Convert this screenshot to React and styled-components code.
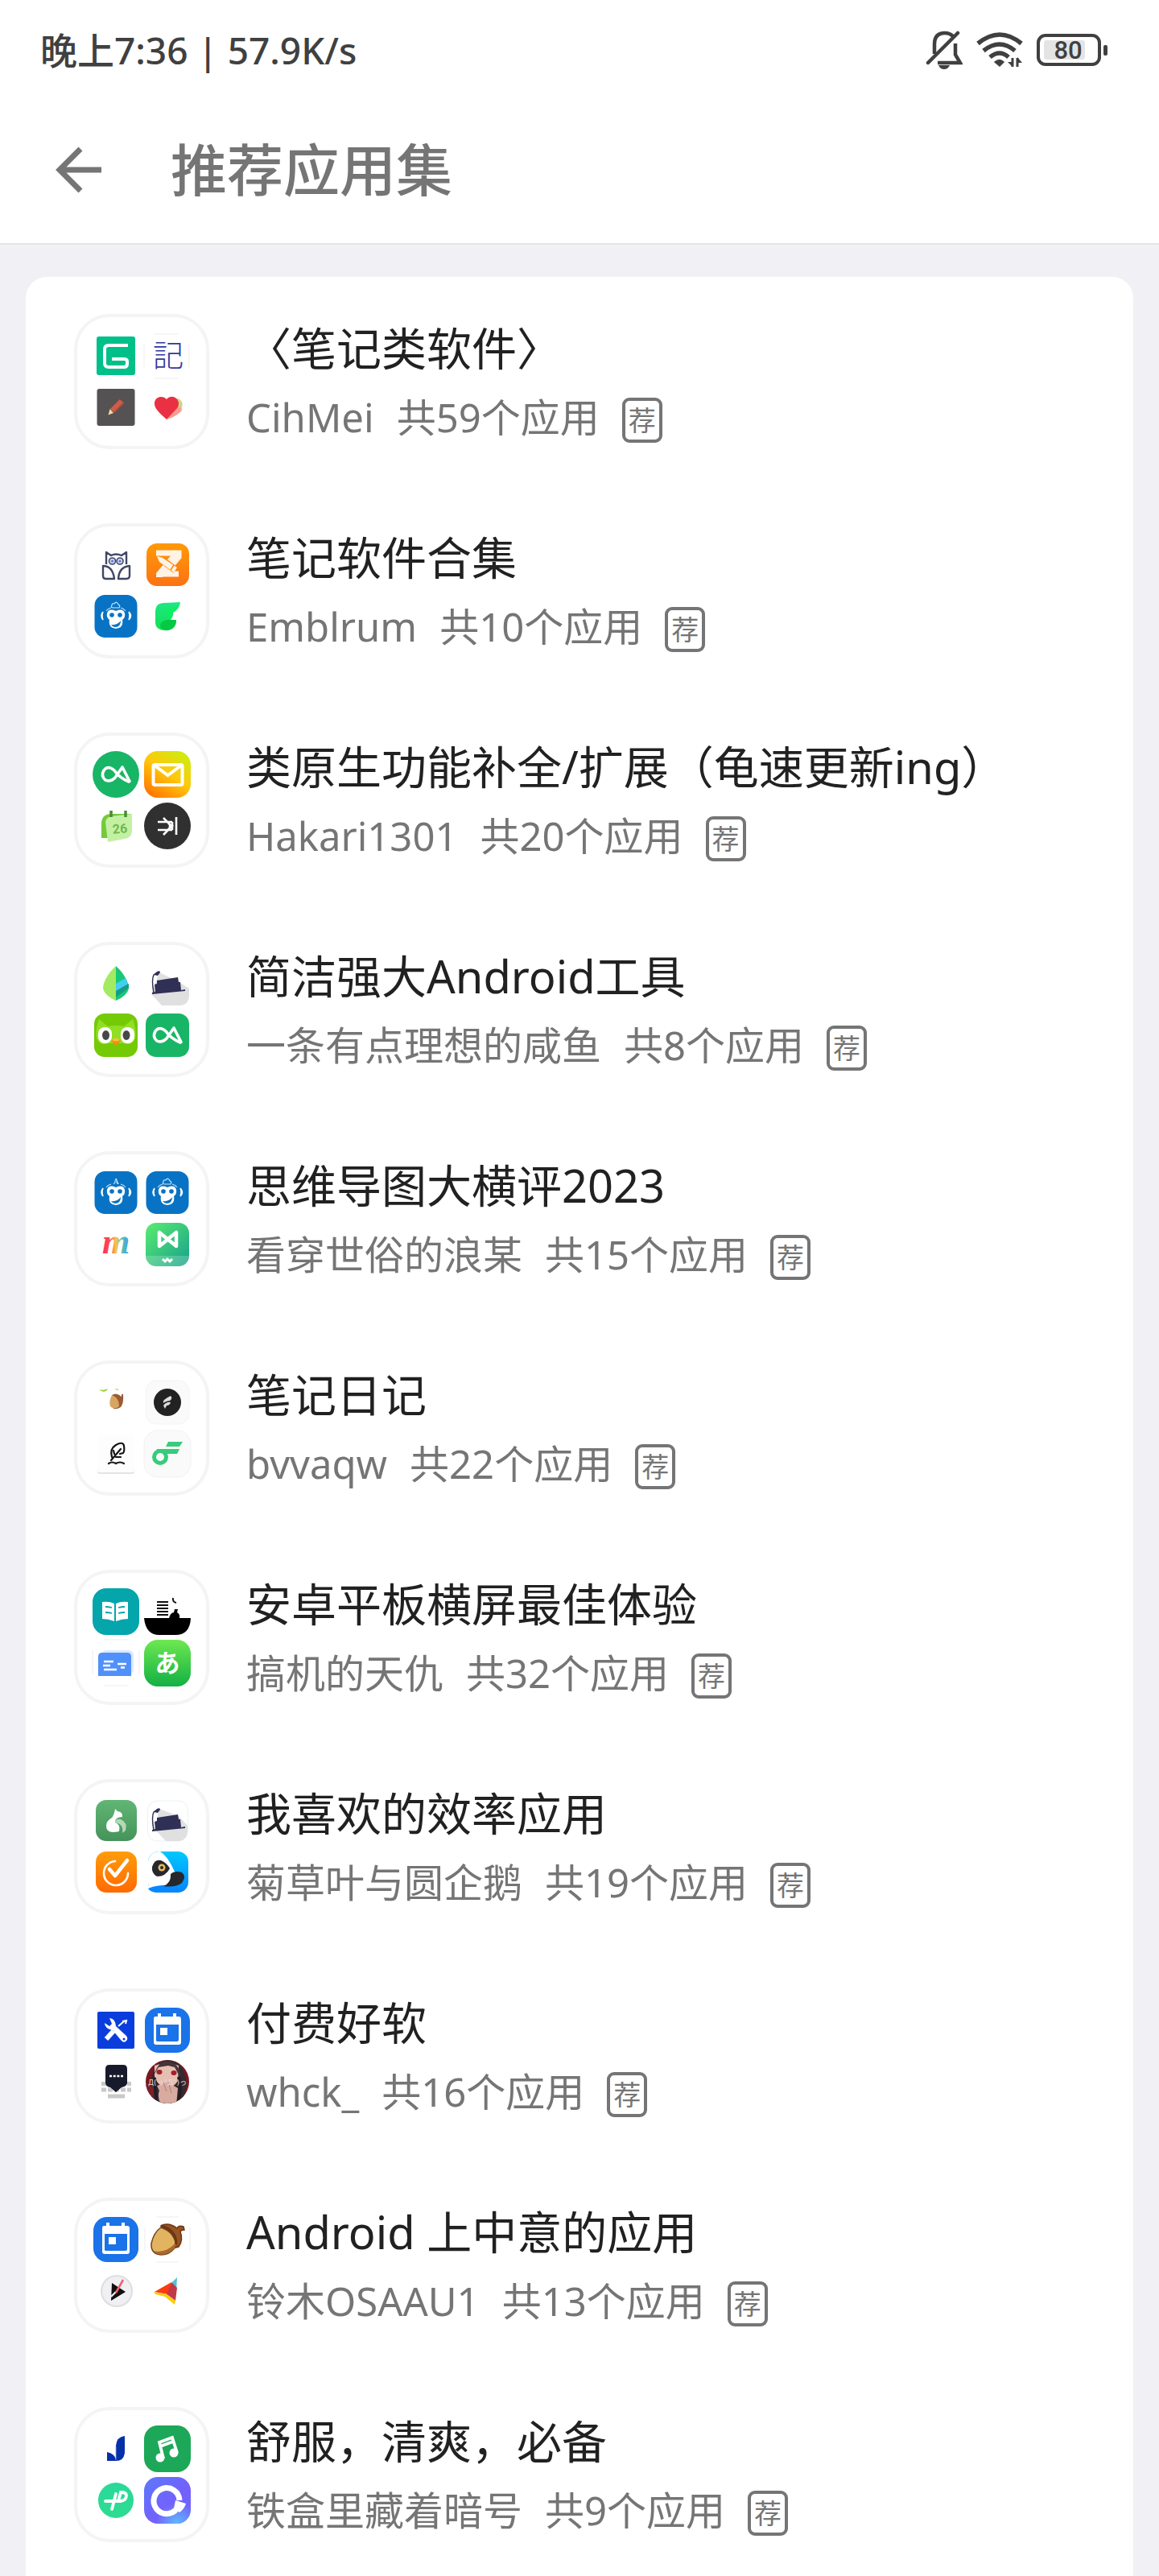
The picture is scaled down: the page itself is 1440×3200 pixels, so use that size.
import React from "react";
import styled, { createGlobalStyle } from "styled-components";

const GlobalStyle = createGlobalStyle`
  * { box-sizing: border-box; }
  body {
    margin: 0;
    background: #f0f0f5;
    font-family: "Noto Sans", "Noto Sans CJK SC", sans-serif;
  }
`;

const Page = styled.div`
  display: flex;
  flex-direction: column;
  min-height: 100vh;
`;

const Header = styled.header`
  background: #fff;
  border-bottom: 2px solid #e4e4e9;
`;

const StatusBar = styled.div`
  display: flex;
  align-items: center;
  justify-content: space-between;
  height: 124px;
  padding: 0 64px 0 50px;
  color: #404040;
  font-size: 46px;
  font-weight: 500;
  line-height: 60px;
`;

const StatusIcons = styled.div`
  display: flex;
  align-items: center;
  gap: 16px;
`;

const Toolbar = styled.div`
  display: flex;
  align-items: center;
  gap: 80px;
  height: 178px;
  padding: 0 64px 4px;
`;

const BackButton = styled.button`
  display: flex;
  padding: 0;
  border: 0;
  background: none;
  color: #757575;
  cursor: pointer;
`;

const Heading = styled.h1`
  margin: 0;
  color: #757575;
  font-size: 70px;
  font-weight: 500;
  line-height: 96px;
`;

const List = styled.ul`
  display: flex;
  flex: 1;
  flex-direction: column;
  gap: 92px;
  margin: 40px 32px 0;
  padding: 46px 60px 0;
  border-radius: 26px 26px 0 0;
  background: #fff;
  list-style: none;
`;

const Row = styled.a`
  display: flex;
  align-items: center;
  gap: 46px;
  color: inherit;
  text-decoration: none;
`;

const Folder = styled.div`
  display: grid;
  flex: none;
  grid-template-columns: 60px 60px;
  gap: 4px;
  padding: 18px;
  border: 4px solid #f4f4f4;
  border-radius: 44px;
`;

const Glyph = styled.svg`
  display: block;
  width: 60px;
  height: 60px;
  overflow: visible;
`;

const Info = styled.div`
  display: flex;
  flex: 1;
  flex-direction: column;
  min-width: 0;
  gap: 6px;
  padding-top: 2px;
`;

const Title = styled.h2`
  margin: 0;
  color: #212121;
  font-size: 56px;
  font-weight: 400;
  line-height: 80px;
  white-space: nowrap;
`;

const Meta = styled.p`
  display: flex;
  align-items: center;
  gap: 28px;
  margin: 0;
  color: #757575;
  font-size: 49px;
  line-height: 80px;
  white-space: nowrap;
`;

const Badge = styled.span`
  display: flex;
  align-items: center;
  justify-content: center;
  width: 50px;
  height: 56px;
  margin-top: 8px;
  border: 4px solid #757575;
  border-radius: 9px;
  font-size: 34px;
  line-height: 44px;
`;

const Icon = ({ children }) => (
  <Glyph viewBox="0 0 60 60" fill="none" aria-hidden="true">{children}</Glyph>
);

const Gradient = ({ id, from, to, diagonal }) => (
  <defs>
    <linearGradient id={id} x1="0" y1="0" x2={diagonal ? 1 : 0} y2="1">
      <stop stopColor={from} />
      <stop offset="1" stopColor={to} />
    </linearGradient>
  </defs>
);

const GNote = () => (
  <Icon>
    <rect x="6" y="6" width="48" height="48" rx="3" fill="#00c08a" />
    <path d="M45 17H21Q16 17 16 22V39Q16 44 21 44H40Q44 44 44 40V37Q44 34 40 34H25" stroke="#fff" strokeWidth="4" />
  </Icon>
);

const JiNote = () => (
  <Icon>
    <path d="M14 3H43M14 58H43M1 16V44M57 16V44" stroke="#f6f6f6" strokeWidth="2" />
    <text x="31" y="43" textAnchor="middle" fontSize="38" fontFamily="Noto Sans CJK JP, sans-serif" fontWeight="300" fill="#33389c">記</text>
  </Icon>
);

const PencilNote = () => (
  <Icon>
    <rect x="6.500" y="7" width="47" height="46" rx="3" fill="#555253" />
    <path d="M25 34L37 22" stroke="#cf5c47" strokeWidth="6" />
    <path d="M27.500 36.500L40 24" stroke="#b34d3c" strokeWidth="1.500" />
    <path d="M22.500 32L27 37L20.500 39.500Z" fill="#f0d9a8" />
  </Icon>
);

const Heart = () => (
  <Icon>
    <path d="M30 45C46 38 53 27 46 21C42 17 38 20 36 24Z" fill="#d3d184" />
    <path d="M29 45C20 37 13 31 14 24C15 16 25 15 29 20C34 14 43 17 44 25C44 33 36 39 29 45Z" fill="#ea3043" />
    <path d="M29 45L43 30Q50 30 47 35Q40 42 29 45Z" fill="#fa9c90" />
  </Icon>
);

const Owl = () => (
  <Icon>
    <g stroke="#414765" strokeWidth="2.400" strokeLinejoin="round">
      <path d="M18 29V14L24 18Q30 15 37 18L43 14V29" />
      <path d="M14 31Q26 31 28 47H17Q14 47 14 43ZM47 31Q34 32 33 47H43Q47 47 47 43Z" />
      <circle cx="25.500" cy="25" r="4" strokeWidth="1.600" fill="#c8d2f8" />
      <circle cx="35" cy="25" r="4" strokeWidth="1.600" fill="#c8d2f8" />
    </g>
    <circle cx="25.500" cy="25" r="1.500" fill="#6278c8" />
    <circle cx="35" cy="25" r="1.500" fill="#6278c8" />
  </Icon>
);

const ZNote = () => (
  <Icon>
    <Gradient id="znote" from="#ff9a05" to="#fc7215" />
    <rect x="4" y="3" width="53" height="53" rx="13" fill="url(#znote)" />
    <path d="M16 15H44V20L26 41H44" stroke="#fff3e6" strokeWidth="7" />
    <path d="M16 45V40L36 16H44V20L24 45Z" fill="#fff3e6" />
    <path d="M21 22L40 36" stroke="#ff8a0a" strokeWidth="9" />
    <path d="M17 19L24 21L42 33L38 39L20 26Z" fill="#fff3e6" />
    <path d="M38 30L34 36" stroke="#ff8808" strokeWidth="1.500" />
  </Icon>
);

const Monkey = ({ letter }) => (
  <Icon>
    <rect x="3.500" y="3" width="53" height="53" rx="13" fill="#0873c4" />
    <path d="M14 24Q10 29 14 34Q12 29 14 24ZM46 24Q51 29 46 34Q48 29 46 24Z" fill="#fff" stroke="#fff" strokeWidth="1.500" />
    <path d="M18 23Q20 20 24 19M36 19Q40 20 42 23" stroke="#b8dcf8" strokeWidth="1.200" />
    <path d="M30 23Q39 19 41 26Q42 31 38 34Q40 44 30 45Q20 44 22 34Q18 31 19 26Q21 19 30 23Z" fill="#fff" />
    <circle cx="25" cy="28" r="2.800" fill="#0873c4" />
    <circle cx="35" cy="28" r="2.800" fill="#0873c4" />
    <path d="M24 40Q32 41 36 35Q36 42 30 43Q26 43 24 40Z" fill="#0873c4" />
    {letter ? (
      <text x="30" y="19" textAnchor="middle" fontSize="10" fontFamily="Liberation Serif, serif" fill="#fff">A</text>
    ) : (
      <path d="M27 19Q23 19 25 16Q25 13 28 14Q31 10 33 15Q36 16 34 19Z" stroke="#d0e8fa" strokeWidth="1.200" />
    )}
  </Icon>
);

const Flag = () => (
  <Icon>
    <Gradient id="flag" from="#1be884" to="#12e050" />
    <path d="M15 24Q15 13 26 13L46 12Q45 21 37 25Q38 29 34 34H41Q41 47 28 47Q15 47 15 37Z" fill="url(#flag)" />
    <path d="M21 41Q22 34 32 34H41Q41 44 31 47Q22 48 21 41Z" fill="#05c844" />
    <path d="M30 20Q37 20 42 17Q41 22 36 25Q37 30 32 34Q32 24 26 23Z" fill="#0bf060" />
  </Icon>
);

const AlphaMark = () => (
  <path d="M47 38.500L38 21L29 34Q23 40 17 37Q11 32 15 25Q20 18 28 25Q34 34 46 39" stroke="#fff" strokeWidth="3.600" strokeLinecap="round" strokeLinejoin="round" />
);

const AlphaRound = () => (
  <Icon><circle cx="30" cy="30" r="29" fill="#18b566" /><AlphaMark /></Icon>
);

const AlphaSquare = () => (
  <Icon><rect x="3" y="3" width="54" height="54" rx="13" fill="#18b566" /><AlphaMark /></Icon>
);

const Mail = () => (
  <Icon>
    <defs>
      <linearGradient id="mail" x1="0.200" y1="1" x2="0.900" y2="0">
        <stop stopColor="#ff7600" />
        <stop offset="0.500" stopColor="#ffc80c" />
        <stop offset="1" stopColor="#c8f010" />
      </linearGradient>
    </defs>
    <rect x="1" y="1" width="58" height="58" rx="17" fill="url(#mail)" />
    <rect x="12.500" y="18" width="36" height="25" rx="2" stroke="#fff" strokeWidth="4" />
    <path d="M14 19L30.500 31L47 19" stroke="#fff" strokeWidth="4" />
  </Icon>
);

const GreenCalendar = () => (
  <Icon>
    <path d="M12 45V26Q13 15 24 15H48V30L24 45Z" fill="#74c93c" />
    <path d="M17 25Q18 19 25 18L50 15Q50 26 50 37Q49 45 41 46L20 50Z" fill="#c4f0a4" />
    <path d="M24 11V19M42 11V19" stroke="#4c8c34" strokeWidth="3.500" />
    <text x="35" y="39" textAnchor="middle" fontSize="16" fontWeight="700" fontFamily="Roboto, sans-serif" fill="#72b84c" transform="rotate(-5 35 34)">26</text>
  </Icon>
);

const DarkGate = () => (
  <Icon>
    <circle cx="30" cy="30" r="29" fill="#303030" />
    <path d="M41 19V41M18 25H36M18 35H36M25 20L33 28V33L25 41M36 25V35M31 27L36 30L31 34" stroke="#fff" strokeWidth="2.600" />
  </Icon>
);

const Leaf = () => (
  <Icon>
    <path d="M30 8C20 17 14 28 14 36Q16 45 30 51Z" fill="#a3eb62" />
    <path d="M30 8C40 17 46 28 46 36Q44 45 30 51Z" fill="#16c878" />
    <path d="M30 30L42 23L45 30L30 39Z" fill="#43ccf4" />
    <path d="M30 39L46 30V35L30 47Z" fill="#179c84" />
  </Icon>
);

const Sofa = ({ framed }) => (
  <Icon>
    {framed && <rect x="5.500" y="5" width="50" height="50" rx="12" fill="#fff" stroke="#e8f4f2" />}
    <path d={framed ? "M20 15L44 24L55 36V42Q54 55 43 55H28L14 40Z" : "M20 16L43 27L57 36V45Q56 57 45 57H23L10 43Z"} fill="#e0e0e1" />
    <path d="M17 26L43 22L44 28L46 28L47 38L52 37V39L11 43V41L15 40L14 31L17 30Z" fill="#302f55" />
    <path d="M13 41Q10 25 13 19L16 17" stroke="#302f55" strokeWidth="1.500" />
    <path d="M13 19L17 15Q21 13 21 16L18 20Z" fill="#302f55" />
  </Icon>
);

const GreenBird = () => (
  <Icon>
    <rect x="3" y="3" width="54" height="54" rx="13" fill="#74ca05" />
    <path d="M9 10L20 19Q30 17 40 19L51 10Q56 25 54 34Q50 44 39 40H21Q10 44 6 34Q4 22 9 10Z" fill="#91df24" />
    <rect x="8" y="20" width="17" height="20" rx="8" fill="#fff" />
    <rect x="36" y="20" width="17" height="20" rx="8" fill="#fff" />
    <ellipse cx="17.500" cy="30" rx="4.500" ry="6" fill="#474747" />
    <ellipse cx="43" cy="30" rx="4.500" ry="6" fill="#474747" />
    <path d="M24 37Q30 31 36 37L30 43Z" fill="#fa8910" />
    <path d="M25 36Q30 31 35 36Q30 39 25 36Z" fill="#ffbf3c" />
  </Icon>
);

const RainbowM = () => (
  <Icon>
    <defs>
      <linearGradient id="rainbow" x1="0" y1="0" x2="1" y2="0">
        <stop stopColor="#ff2860" />
        <stop offset="0.300" stopColor="#fb5548" />
        <stop offset="0.500" stopColor="#ffc444" />
        <stop offset="0.700" stopColor="#5ac4b0" />
        <stop offset="1" stopColor="#3c9af0" />
      </linearGradient>
    </defs>
    <text x="30" y="41" textAnchor="middle" fontSize="44" fontStyle="italic" fontWeight="700" fontFamily="Liberation Serif, serif" fill="url(#rainbow)">m</text>
  </Icon>
);

const MindMap = () => (
  <Icon>
    <Gradient id="mindmap" from="#5aec70" to="#16a08c" diagonal />
    <rect x="3" y="3" width="54" height="54" rx="13" fill="url(#mindmap)" />
    <path d="M3 44H57Q57 57 44 57H16Q3 57 3 44Z" fill="#fff" opacity="0.200" />
    <path d="M41 15V32L20 15V32L30 24M41 15L32 22" stroke="#fff" strokeWidth="4.500" strokeLinejoin="round" strokeLinecap="round" />
    <path d="M24 48L27 51L30 48L33 51L36 48" stroke="#fff" strokeWidth="3" />
  </Icon>
);

const SmallAcorn = () => (
  <Icon>
    <path d="M9 14Q15 16 20 13Q16 20 9 14ZM28 13Q32 16 34 14" fill="#9cca28" />
    <path d="M25 21Q31 17 37 23V20L39 20Q40 31 36 36Q31 39 27 38Z" fill="#985c34" />
    <path d="M25 21Q34 24 34 35Q28 40 23 35Q21 29 25 21Z" fill="#d8a560" />
  </Icon>
);

const Torch = () => (
  <Icon>
    <rect x="3" y="3" width="54" height="54" rx="13" fill="#fafafa" stroke="#f4f4f4" />
    <circle cx="30" cy="30" r="17" fill="#222" />
    <path d="M25 31Q23 27 34 22Q37 25 33 28Q27 29 25 31ZM25 34Q29 29 34 30Q33 34 29 34L27 38Z" fill="#ddd" />
  </Icon>
);

const Feather = () => (
  <Icon>
    <rect x="7" y="9" width="46" height="46" rx="3" fill="#e4e4e4" />
    <rect x="7" y="7" width="46" height="46" rx="3" fill="#fdfdfd" />
    <path d="M24 38L36 24M25 34Q22 24 30 19Q39 14 40 20Q41 27 39 29L35 30M28 30L27 26M30 34L36 34M21 42Q25 39 30 42Q35 39 40 42" stroke="#141414" strokeWidth="2.200" strokeLinecap="round" />
  </Icon>
);

const FlowKey = () => (
  <Icon>
    <rect x="1" y="1" width="58" height="58" rx="17" fill="#fafafa" stroke="#f2f2f2" />
    <circle cx="21" cy="34" r="7.500" stroke="#36cc7c" strokeWidth="5" />
    <path d="M16 24H45L42 30H26ZM31 15H49L45 21H28Z" fill="#36cc7c" />
  </Icon>
);

const Book = () => (
  <Icon>
    <rect x="1" y="1" width="58" height="58" rx="17" fill="#04a5ab" />
    <path d="M13 18Q22 17 28 20V42Q21 39 13 39ZM45 18Q36 17 30 20V42Q37 39 45 39Z" fill="#fff" />
    <path d="M17 24Q21 24 25 25M17 31Q21 31 25 32M41 24Q37 24 33 25M41 31Q37 31 33 32" stroke="#04a5ab" strokeWidth="1.800" />
  </Icon>
);

const Boat = () => (
  <Icon>
    <path d="M1 38H59Q58 59 40 59H20Q3 59 1 38Z" fill="#000" />
    <path d="M17 18H31M17 22H31M17 26H31M17 30H31M17 34H31" stroke="#111" strokeWidth="1.800" />
    <path d="M37 13Q36 18 41 19" stroke="#111" strokeWidth="2" />
    <path d="M32 38Q34 31 38 31L39 27H43L42 31Q46 33 45 38Z" fill="#000" />
  </Icon>
);

const BlueCard = () => (
  <Icon>
    <path d="M15 1H46M15 58H46M1 14V44M59 14V44" stroke="#f6f6f6" strokeWidth="2" />
    <rect x="12" y="14" width="40" height="30" rx="6" fill="#dce8ff" />
    <path d="M8 46V22Q8 17 13 17H44Q49 17 49 22V46Z" fill="#5090fa" />
    <path d="M15 28H27M14 33H23M15 38H31M32 31H43M36 35.500H41" stroke="#fff" strokeWidth="2.400" />
  </Icon>
);

const Hiragana = () => (
  <Icon>
    <Gradient id="hiragana" from="#6ee850" to="#12b043" />
    <rect x="1" y="1" width="58" height="58" rx="17" fill="url(#hiragana)" />
    <text x="30" y="41" textAnchor="middle" fontSize="31" fontWeight="700" fontFamily="Noto Sans CJK JP, sans-serif" fill="#fff">あ</text>
  </Icon>
);

const Squirrel = () => (
  <Icon>
    <Gradient id="squirrel" from="#60b674" to="#45935a" />
    <rect x="5" y="4" width="51" height="51" rx="13" fill="url(#squirrel)" />
    <path d="M29 15L32 18Q39 19 38 25Q29 25 29 32Q36 34 34 43Q18 47 18 36Q18 30 25 26Q28 22 29 15Z" fill="#fff" />
    <path d="M29 32Q30 27 36 28Q45 32 42 42L38 45Q40 34 29 32Z" fill="#b4d8ba" />
  </Icon>
);

const Tick = () => (
  <Icon>
    <Gradient id="tick" from="#ff9c0c" to="#ff6a00" />
    <rect x="5" y="4" width="51" height="51" rx="13" fill="url(#tick)" />
    <path d="M29 16A15 15 0 1 0 45 31" stroke="#fff" strokeWidth="2.600" strokeLinecap="round" />
    <path d="M22 26L29 34L44 15" stroke="#fff" strokeWidth="4.500" strokeLinejoin="round" strokeLinecap="round" />
  </Icon>
);

const Lemur = () => (
  <Icon>
    <Gradient id="lemur" from="#02c8fc" to="#0884ff" />
    <rect x="6" y="4" width="50" height="51" rx="13" fill="url(#lemur)" />
    <path d="M6 16Q8 4 21 4Q30 9 39 29L50 36Q43 47 27 47L9 50Q6 47 6 42Z" fill="#fff" />
    <path d="M6 50Q18 45 36 46L32 55H18Q9 55 6 50Z" fill="#0688ff" />
    <path d="M11 23Q14 13 22 15Q29 18 33 25Q28 35 17 35Q10 31 11 23Z" fill="#25282d" />
    <path d="M34 32Q39 27 48 30Q54 35 48 43Q40 49 25 47Q35 43 34 32Z" fill="#25282d" />
    <circle cx="23" cy="24" r="4.500" fill="#e8ba5c" />
    <circle cx="23" cy="24" r="2" fill="#25282d" />
  </Icon>
);

const Tools = () => (
  <Icon>
    <rect x="7" y="7" width="46" height="46" rx="2" fill="#0b3ddc" />
    <path d="M27 31L18 41" stroke="#fff" strokeWidth="6" />
    <path d="M33 25L40 19" stroke="#fff" strokeWidth="2" />
    <path d="M38 19L43 18L42 22" stroke="#fff" strokeWidth="2" />
    <path d="M22 15Q29 15 30 25L43 37Q46 41 42 44Q39 46 36 42L26 30Q16 28 16 21L22 25L25 22Z" fill="#fff" />
    <circle cx="40" cy="41" r="1.500" fill="#0b3ddc" />
  </Icon>
);

const BlueCalendar = () => (
  <Icon>
    <rect x="2" y="2" width="56" height="56" rx="17" fill="#1a73e8" />
    <path d="M20 9V16M39 9V16" stroke="#fff" strokeWidth="4" />
    <path d="M15 13H44Q47 13 47 16V45Q47 48 44 48H16Q13 48 13 45V16Q13 13 15 13ZM16 23V43Q16 44 18 44H42Q44 44 44 42V23Z" fill="#fff" fillRule="evenodd" />
    <rect x="21" y="27" width="9" height="9" fill="#fff" />
  </Icon>
);

const Keyboard = () => (
  <Icon>
    <path d="M12 32.500H49M12 40H49" stroke="#c9c9c9" strokeWidth="5" strokeDasharray="6 2" />
    <path d="M20 48H41" stroke="#c9c9c9" strokeWidth="5" />
    <path d="M22 9H39Q44 9 44 14V32Q43 36 37 37L30 43L23 37Q17 36 17 31V14Q17 9 22 9Z" fill="#171a2a" />
    <path d="M22 23H39" stroke="#fff" strokeWidth="2.600" strokeDasharray="3 1.700" />
  </Icon>
);

const Portrait = () => (
  <Icon>
    <defs>
      <clipPath id="portraitClip"><circle cx="30" cy="30" r="27" /></clipPath>
    </defs>
    <g clipPath="url(#portraitClip)">
      <rect width="60" height="60" fill="#7a1820" />
      <path d="M10 30Q12 4 31 3Q52 5 54 34L48 60H10Z" fill="#352b31" />
      <path d="M14 10Q30 4 44 10L43 29Q38 37 29 38Q18 36 14 23Z" fill="#e5bfb2" />
      <path d="M13 22Q20 2 31 5Q46 7 46 25L39 12L31 10L19 12Z" fill="#44353a" />
      <ellipse cx="20" cy="18" rx="3.500" ry="3" fill="#a52028" />
      <ellipse cx="38" cy="19" rx="3.500" ry="3" fill="#a52028" />
      <path d="M17 35L31 31L43 38L41 59H22Q17 48 20 41Z" fill="#d8aba0" />
      <path d="M25 31L29 42M31 30L35 44" stroke="#b47c74" />
      <path d="M3 34L14 37L17 60H3Z" fill="#7a2028" />
      <path d="M14 25L16 57M44 24Q48 42 43 57" stroke="#241e24" strokeWidth="4" />
    </g>
    <text x="30" y="34" textAnchor="middle" fontSize="9" fontFamily="DejaVu Sans, Noto Sans CJK JP, sans-serif" fill="#ecd6d8">Д(っ°Д°)っ</text>
  </Icon>
);

const Acorn = () => (
  <Icon>
    <path d="M16 2H44M16 58H44M2 15V44M58 15V44" stroke="#f6f6f6" strokeWidth="2" />
    <path d="M22 13Q31 8 42 16Q44 12 50 14L51 18Q47 18 46 20Q50 31 44 39L33 42Z" fill="#985322" stroke="#703513" strokeWidth="1.500" />
    <path d="M22 15Q38 20 41 37Q35 49 22 49Q9 48 10 35Q13 21 22 15Z" fill="#e3b460" stroke="#74401c" strokeWidth="1.500" />
    <path d="M40 34Q28 48 12 44Q18 50 27 48Q37 46 41 37Z" fill="#a9692c" />
    <path d="M22 13Q41 18 41 36" stroke="#6c3516" strokeWidth="3" />
  </Icon>
);

const PlayDisc = () => (
  <Icon>
    <circle cx="31" cy="30" r="20" fill="#dedee2" />
    <circle cx="31" cy="30" r="18" fill="#f0f0f3" />
    <path d="M25 20L42 31L24 42Z" fill="#101010" />
    <path d="M24 37L30 31" stroke="#f0f0f3" strokeWidth="2.200" />
    <path d="M30 32L34 25L39 16" stroke="#f26270" strokeWidth="2.600" />
  </Icon>
);

const PaperPlane = () => (
  <Icon>
    <path d="M35 20L42 13L41 30Z" fill="#4fc4cc" />
    <path d="M14 31L35 19L30 34Z" fill="#fc3c0c" />
    <path d="M35 19L42 26L40 42L29 34Z" fill="#bf3948" />
    <path d="M13 31L29 34L40 42L39 47L27 37L15 34Z" fill="#fccc13" />
  </Icon>
);

const JMark = () => (
  <Icon>
    <path d="M41 14V33Q41 45 30 45H19V34Q28 36 30 43V26Q31 15 41 14Z" fill="#0630aa" />
    <path d="M30 27V44" stroke="#9ab0e8" strokeWidth="0.800" />
  </Icon>
);

const Music = () => (
  <Icon>
    <rect x="1" y="1" width="58" height="58" rx="17" fill="#1ca858" />
    <circle cx="21" cy="41" r="5.500" fill="#fff" />
    <circle cx="38" cy="35" r="5.500" fill="#fff" />
    <path d="M25 42L20 22L36 16L42 35M21 27L37 21" stroke="#fff" strokeWidth="3.800" />
  </Icon>
);

const PMark = () => (
  <Icon>
    <Gradient id="pmark" from="#29d99b" to="#2ddc90" />
    <circle cx="30" cy="30" r="22" fill="url(#pmark)" />
    <path d="M30 22L25 41M17 31H36Q43 30 43 24Q43 20 36 20L33 31" stroke="#fff" strokeWidth="3.800" strokeLinecap="round" />
  </Icon>
);

const RingMark = () => (
  <Icon>
    <defs>
      <linearGradient id="ring" x1="0" y1="0" x2="1" y2="1">
        <stop stopColor="#5c78fc" />
        <stop offset="0.600" stopColor="#7460fc" />
        <stop offset="1" stopColor="#6c6cfc" />
      </linearGradient>
      <radialGradient id="ringGlow" cx="0.700" cy="1" r="0.450">
        <stop stopColor="#60baff" />
        <stop offset="1" stopColor="#60baff" stopOpacity="0" />
      </radialGradient>
    </defs>
    <rect x="1" y="1" width="58" height="58" rx="17" fill="url(#ring)" />
    <rect x="1" y="1" width="58" height="58" rx="17" fill="url(#ringGlow)" />
    <path d="M45 30A16 16 0 1 0 42 40" stroke="#fff" strokeWidth="7" />
    <path d="M40 30L53 34Q51 41 45 45L38 40Z" fill="#fff" />
  </Icon>
);

const collections = [
  { title: "〈笔记类软件〉", author: "CihMei", count: 59, icons: [<GNote />, <JiNote />, <PencilNote />, <Heart />] },
  { title: "笔记软件合集", author: "Emblrum", count: 10, icons: [<Owl />, <ZNote />, <Monkey />, <Flag />] },
  { title: "类原生功能补全/扩展（龟速更新ing）", author: "Hakari1301", count: 20, icons: [<AlphaRound />, <Mail />, <GreenCalendar />, <DarkGate />] },
  { title: "简洁强大Android工具", author: "一条有点理想的咸鱼", count: 8, icons: [<Leaf />, <Sofa />, <GreenBird />, <AlphaSquare />] },
  { title: "思维导图大横评2023", author: "看穿世俗的浪某", count: 15, icons: [<Monkey letter />, <Monkey />, <RainbowM />, <MindMap />] },
  { title: "笔记日记", author: "bvvaqw", count: 22, icons: [<SmallAcorn />, <Torch />, <Feather />, <FlowKey />] },
  { title: "安卓平板横屏最佳体验", author: "搞机的天仇", count: 32, icons: [<Book />, <Boat />, <BlueCard />, <Hiragana />] },
  { title: "我喜欢的效率应用", author: "菊草叶与圆企鹅", count: 19, icons: [<Squirrel />, <Sofa framed />, <Tick />, <Lemur />] },
  { title: "付费好软", author: "whck_", count: 16, icons: [<Tools />, <BlueCalendar />, <Keyboard />, <Portrait />] },
  { title: "Android 上中意的应用", author: "铃木OSAAU1", count: 13, icons: [<BlueCalendar />, <Acorn />, <PlayDisc />, <PaperPlane />] },
  { title: "舒服，清爽，必备", author: "铁盒里藏着暗号", count: 9, icons: [<JMark />, <Music />, <PMark />, <RingMark />] },
];

const Muted = () => (
  <svg width="46" height="50" viewBox="0 0 46 50" fill="none" aria-hidden="true">
    <path d="M11 30V18Q11 4 24 4Q30 4 34 8M37 17V31L43 41H15" stroke="#404040" strokeWidth="4.500" />
    <path d="M3 41L40 4" stroke="#404040" strokeWidth="4.500" strokeLinecap="round" />
    <path d="M16 44H30Q28 49 23 49Q18 49 16 44Z" fill="#404040" />
  </svg>
);

const Wifi = () => (
  <svg width="60" height="46" viewBox="0 0 60 46" fill="none" aria-hidden="true">
    <path d="M3 15Q30 -7 57 15M10 24Q30 8 49 24M18 32Q30 22 41 32" stroke="#404040" strokeWidth="5.500" />
    <path d="M24 38Q30 33 35 38L30 43Z" fill="#404040" stroke="#404040" strokeWidth="1.500" />
    <path d="M46 33V44M52 33V44" stroke="#404040" strokeWidth="3" />
    <path d="M40 38H46V44ZM58 39H52V32Z" fill="#404040" />
  </svg>
);

const Battery = () => (
  <svg width="88" height="40" viewBox="0 0 88 40" fill="none" aria-label="80%">
    <rect x="2" y="2" width="76" height="36" rx="9" stroke="#404040" strokeWidth="4" />
    <rect x="9" y="8" width="51" height="24" rx="3" fill="#e4e4e4" />
    <rect x="83" y="14" width="5" height="13" rx="2" fill="#404040" />
    <text x="39" y="31" textAnchor="middle" fontSize="31" fontFamily="Roboto, sans-serif" fill="#404040">80</text>
  </svg>
);

export default function App() {
  return (
    <Page>
      <GlobalStyle />
      <Header>
        <StatusBar>
          <span>晚上7:36 | 57.9K/s</span>
          <StatusIcons><Muted /><Wifi /><Battery /></StatusIcons>
        </StatusBar>
        <Toolbar>
          <BackButton type="button" aria-label="返回">
            <svg width="68" height="60" viewBox="0 0 68 60" fill="none" aria-hidden="true">
              <path d="M36 4L10 30L36 56M10 30H62" stroke="currentColor" strokeWidth="7" />
            </svg>
          </BackButton>
          <Heading>推荐应用集</Heading>
        </Toolbar>
      </Header>
      <List>
        {collections.map(({ title, author, count, icons }) => (
          <li key={title}>
            <Row href="#">
              <Folder>
                {icons.map((icon, i) => <React.Fragment key={i}>{icon}</React.Fragment>)}
              </Folder>
              <Info>
                <Title>{title}</Title>
                <Meta>
                  <span>{author}</span>
                  <span>共{count}个应用</span>
                  <Badge>荐</Badge>
                </Meta>
              </Info>
            </Row>
          </li>
        ))}
      </List>
    </Page>
  );
}
